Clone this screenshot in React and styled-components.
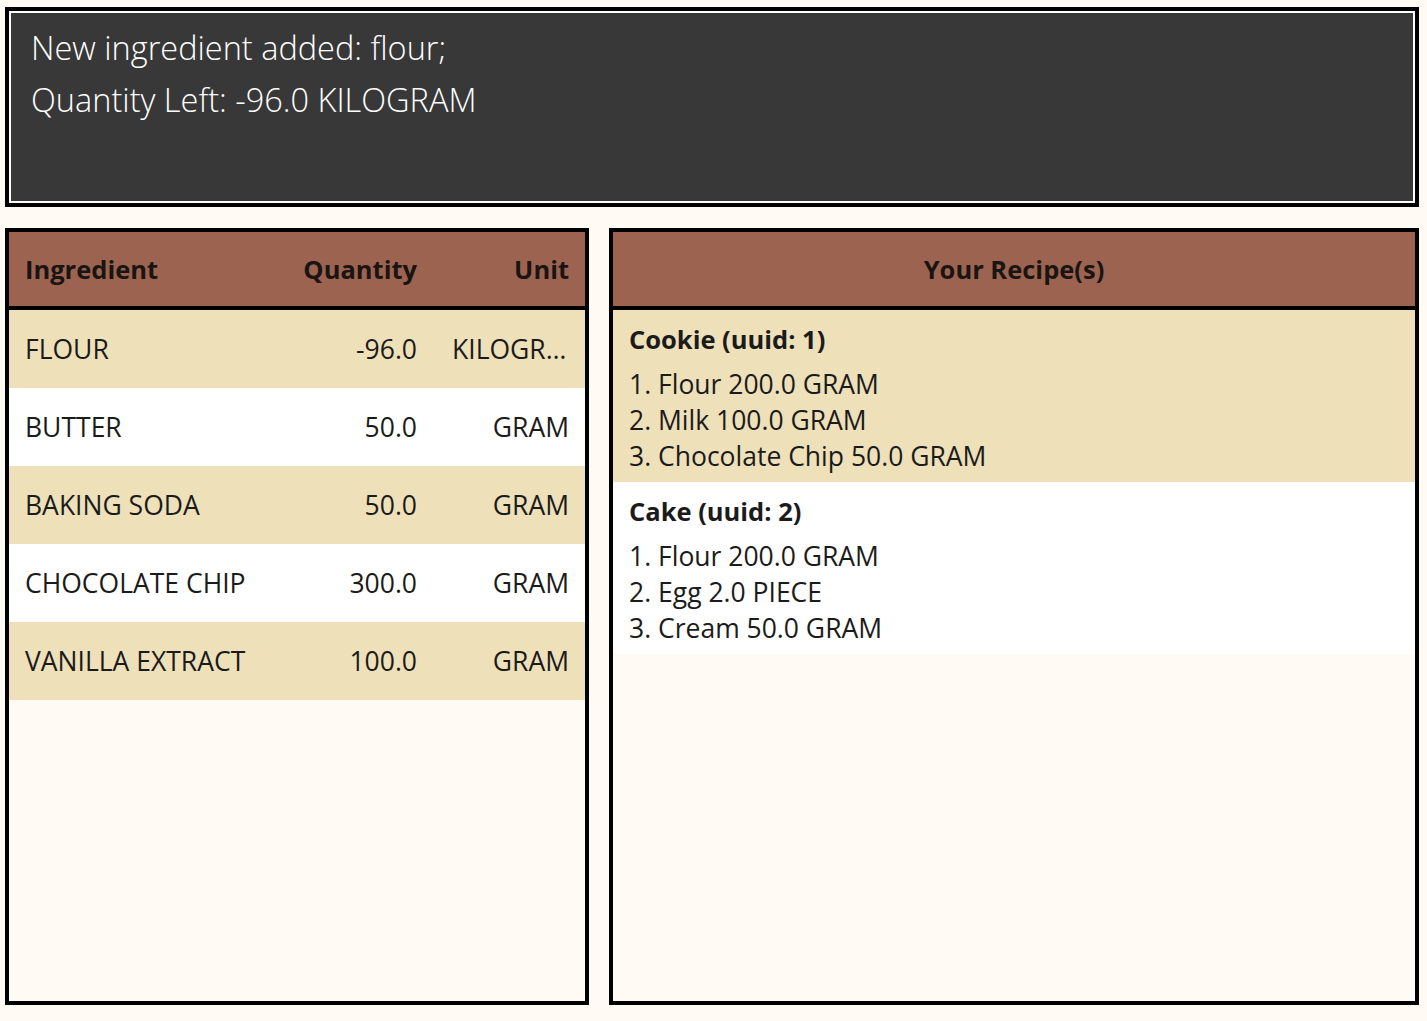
import React from 'react';
import styled, { createGlobalStyle } from 'styled-components';

const ingredients = [
  { name: 'FLOUR', quantity: '-96.0', unit: 'KILOGRAM' },
  { name: 'BUTTER', quantity: '50.0', unit: 'GRAM' },
  { name: 'BAKING SODA', quantity: '50.0', unit: 'GRAM' },
  { name: 'CHOCOLATE CHIP', quantity: '300.0', unit: 'GRAM' },
  { name: 'VANILLA EXTRACT', quantity: '100.0', unit: 'GRAM' },
];

const recipes = [
  {
    name: 'Cookie',
    uuid: 1,
    items: ['Flour 200.0 GRAM', 'Milk 100.0 GRAM', 'Chocolate Chip 50.0 GRAM'],
  },
  {
    name: 'Cake',
    uuid: 2,
    items: ['Flour 200.0 GRAM', 'Egg 2.0 PIECE', 'Cream 50.0 GRAM'],
  },
];

const GlobalStyle = createGlobalStyle`
  html, body {
    margin: 0;
    padding: 0;
    background: #fffaf3;
  }
  body {
    font-family: "Open Sans", "Noto Sans", sans-serif;
    color: #1b1b1b;
  }
`;

const Page = styled.div`
  display: flex;
  flex-direction: column;
  gap: 21px;
  padding: 7px 8px 0 5px;
  width: 1414px;
`;

const MessageBox = styled.div`
  height: 200px;
  box-sizing: border-box;
  border: 4px solid #000;
  background: #383838;
  box-shadow: inset 0 0 0 2px #fff;
  padding: 11px 22px;
  color: #fff;
  font-weight: 300;
  font-size: 32.5px;
  line-height: 52px;
`;

const Panels = styled.div`
  display: grid;
  grid-template-columns: 584px 810px;
  gap: 20px;
  height: 777px;
`;

const Panel = styled.div`
  box-sizing: border-box;
  border: 4px solid #000;
  display: flex;
  flex-direction: column;
  background: #fffaf3;
  overflow: hidden;
`;

const HeaderRow = styled.div`
  height: 74px;
  flex: none;
  border-bottom: 4px solid #000;
  background: #9c6450;
  display: ${({ $center }) => ($center ? 'flex' : 'grid')};
  justify-content: center;
  grid-template-columns: 1fr 150px 152px;
  align-items: center;
  font-weight: 700;
  font-size: 25.5px;
  color: #1a1412;
`;

const Row = styled.div`
  height: 78px;
  flex: none;
  display: grid;
  grid-template-columns: 1fr 150px 152px;
  align-items: center;
  background: ${({ $odd }) => ($odd ? '#fff' : '#eee0b9')};
  font-size: 26.5px;
`;

const Cell = styled.div`
  padding: ${({ $unit }) => ($unit ? '0 16px 0 19px' : '0 16px 0 16px')};
  text-align: ${({ $align }) => $align || 'left'};
  white-space: nowrap;
  overflow: hidden;
  text-overflow: ellipsis;
`;

const RecipeBlock = styled.div`
  flex: none;
  height: 172px;
  box-sizing: border-box;
  padding: 12px 16px 0;
  background: ${({ $odd }) => ($odd ? '#fff' : '#eee0b9')};
  font-size: 26.5px;
`;

const RecipeTitle = styled.div`
  font-weight: 700;
  font-size: 25.5px;
  line-height: 34px;
  margin-bottom: 10px;
`;

const RecipeItem = styled.div`
  line-height: 36px;
`;

export default function App() {
  return (
    <>
      <GlobalStyle />
      <Page>
        <MessageBox>
          <div>New ingredient added: flour;</div>
          <div>Quantity Left: -96.0 KILOGRAM</div>
        </MessageBox>
        <Panels>
          <Panel>
            <HeaderRow>
              <Cell>Ingredient</Cell>
              <Cell $align="right">Quantity</Cell>
              <Cell $align="right" $unit>Unit</Cell>
            </HeaderRow>
            {ingredients.map((ing, i) => (
              <Row key={ing.name} $odd={i % 2 === 1}>
                <Cell>{ing.name}</Cell>
                <Cell $align="right">{ing.quantity}</Cell>
                <Cell $align="right" $unit>{ing.unit}</Cell>
              </Row>
            ))}
          </Panel>
          <Panel>
            <HeaderRow $center>Your Recipe(s)</HeaderRow>
            {recipes.map((r, i) => (
              <RecipeBlock key={r.uuid} $odd={i % 2 === 1}>
                <RecipeTitle>{r.name} (uuid: {r.uuid})</RecipeTitle>
                {r.items.map((item, j) => (
                  <RecipeItem key={item}>{j + 1}. {item}</RecipeItem>
                ))}
              </RecipeBlock>
            ))}
          </Panel>
        </Panels>
      </Page>
    </>
  );
}
